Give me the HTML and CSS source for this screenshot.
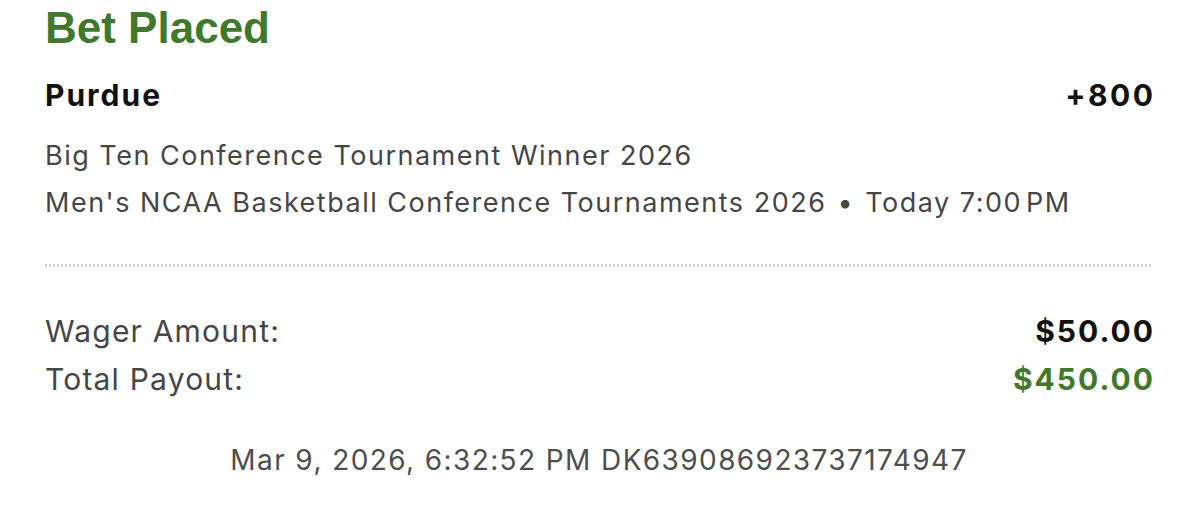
FILE: index.html
```html
<!DOCTYPE html>
<html>
<head>
<meta charset="utf-8">
<link rel="stylesheet" href="styles.css">
</head>
<body>
<div class="receipt">
  <h1 class="title">Bet Placed</h1>
  <div class="row pick">
    <span class="team">Purdue</span>
    <span class="odds">+800</span>
  </div>
  <div class="meta first">Big Ten Conference Tournament Winner 2026</div>
  <div class="meta">Men's NCAA Basketball Conference Tournaments 2026 <span class="dot">•</span> Today 7:00&#8202;PM</div>
  <div class="divider"></div>
  <div class="row amount first">
    <span class="label">Wager Amount:</span>
    <span class="value">$50.00</span>
  </div>
  <div class="row amount">
    <span class="label">Total Payout:</span>
    <span class="value green">$450.00</span>
  </div>
  <div class="footer">Mar 9, 2026, 6:32:52 PM DK639086923737174947</div>
</div>
</body>
</html>
```

FILE: styles.css
```css
html, body {
  margin: 0;
  padding: 0;
  background: #ffffff;
}
.receipt {
  display: flex;
  flex-direction: column;
  padding: 2px 46px 0 45px;
  font-family: "Inter", "Liberation Sans", sans-serif;
}
.title {
  margin: 0;
  font-family: "Liberation Sans", Arial, sans-serif;
  font-weight: 700;
  font-size: 44px;
  line-height: 52px;
  color: #3f7a2c;
}
.row {
  display: flex;
  justify-content: space-between;
  align-items: baseline;
}
.pick {
  margin-top: 21px;
  font-weight: 700;
  font-size: 30px;
  line-height: 40px;
  color: #121212;
}
.team {
  letter-spacing: 2px;
}
.odds {
  letter-spacing: 2.5px;
  margin-right: -2.5px;
}
.meta {
  font-size: 27px;
  line-height: 47px;
  color: #464646;
  letter-spacing: 1.5px;
}
.meta.first {
  margin-top: 17px;
}
.dot {
  padding: 0 2px;
}
.divider {
  margin-top: 38px;
  height: 3px;
  background-image: repeating-linear-gradient(to right, #cfcfcf 0 2px, transparent 2px 4px);
}
.amount.first {
  margin-top: 40px;
}
.amount {
  line-height: 48px;
}
.label {
  font-size: 30px;
  color: #464646;
  letter-spacing: 1.2px;
}
.value {
  font-weight: 700;
  font-size: 30px;
  letter-spacing: 2px;
  margin-right: -2px;
  color: #121212;
}
.value.green {
  color: #3f7a2c;
}
.footer {
  margin-top: 37px;
  text-align: center;
  font-size: 28px;
  line-height: 40px;
  color: #4e4e4e;
  letter-spacing: 1.4px;
}
```
